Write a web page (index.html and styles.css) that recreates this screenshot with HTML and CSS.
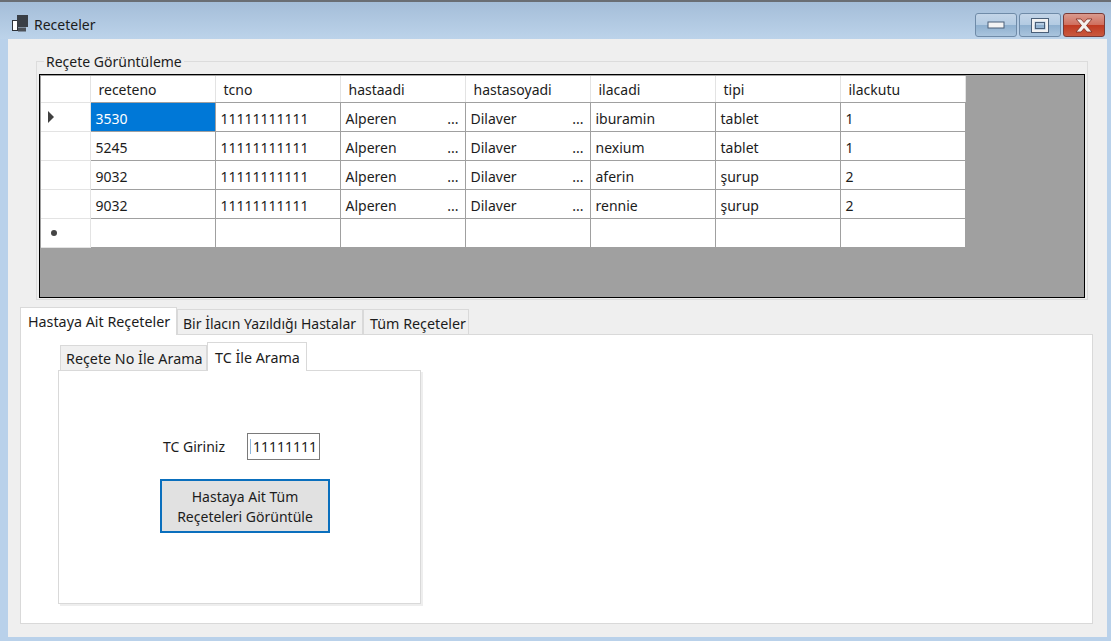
FILE: index.html
```html
<!DOCTYPE html>
<html lang="tr">
<head>
	<meta charset="UTF-8">
	<title>Receteler</title>
	<link rel="stylesheet" href="styles.css">
</head>
<body>
	<div class="window">
		<div class="titlebar">
			<svg class="appicon" width="18" height="17" viewBox="0 0 18 17">
				<rect x="1.5" y="5.5" width="5" height="10" fill="#fff" stroke="#2e3238" stroke-width="1"/>
				<rect x="6" y="0" width="11" height="12" fill="#3a3f46"/>
				<rect x="7" y="12.500" width="8" height="4" fill="#4c5158"/>
			</svg>
			<span class="title">Receteler</span>
			<div class="controls">
				<div class="ctl">
					<svg width="18" height="8" viewBox="0 0 18 8"><rect x="1" y="1" width="16" height="6" fill="#f4f4f4" stroke="#4a5f78"/></svg>
				</div>
				<div class="ctl">
					<svg width="18" height="15" viewBox="0 0 18 15"><rect x="2" y="2" width="14" height="11" fill="none" stroke="#f2f2f2" stroke-width="3"/><rect x="0.500" y="0.500" width="17" height="14" fill="none" stroke="#4a5f78"/><rect x="4.500" y="4.500" width="9" height="6" fill="none" stroke="#4a5f78"/></svg>
				</div>
				<div class="ctl close">
					<svg width="20" height="15" viewBox="0 0 20 15"><path d="M2 1H7L10 4.500L13 1H18L12.500 7.500L18 14H13L10 10.500L7 14H2L7.500 7.500Z" fill="#f4f1ef" stroke="#7a2a20" stroke-width="0.8"/></svg>
				</div>
			</div>
		</div>

		<div class="client">
			<fieldset class="group">
				<legend>Reçete Görüntüleme</legend>
				<div class="gridview">
					<table class="datagrid">
						<thead>
							<tr>
								<th class="rowhead"></th>
								<th>receteno</th>
								<th>tcno</th>
								<th>hastaadi</th>
								<th>hastasoyadi</th>
								<th>ilacadi</th>
								<th>tipi</th>
								<th>ilackutu</th>
							</tr>
						</thead>
						<tbody>
							<tr>
								<td class="rowhead"><span class="arrow"></span></td>
								<td class="selected">3530</td>
								<td>11111111111</td>
								<td class="cut"><span>Alperen</span><span class="dots">...</span></td>
								<td class="cut"><span>Dilaver</span><span class="dots">...</span></td>
								<td>iburamin</td>
								<td>tablet</td>
								<td>1</td>
							</tr>
							<tr>
								<td class="rowhead"></td>
								<td>5245</td>
								<td>11111111111</td>
								<td class="cut"><span>Alperen</span><span class="dots">...</span></td>
								<td class="cut"><span>Dilaver</span><span class="dots">...</span></td>
								<td>nexium</td>
								<td>tablet</td>
								<td>1</td>
							</tr>
							<tr>
								<td class="rowhead"></td>
								<td>9032</td>
								<td>11111111111</td>
								<td class="cut"><span>Alperen</span><span class="dots">...</span></td>
								<td class="cut"><span>Dilaver</span><span class="dots">...</span></td>
								<td>aferin</td>
								<td>şurup</td>
								<td>2</td>
							</tr>
							<tr>
								<td class="rowhead"></td>
								<td>9032</td>
								<td>11111111111</td>
								<td class="cut"><span>Alperen</span><span class="dots">...</span></td>
								<td class="cut"><span>Dilaver</span><span class="dots">...</span></td>
								<td>rennie</td>
								<td>şurup</td>
								<td>2</td>
							</tr>
							<tr>
								<td class="rowhead"><span class="star"></span></td>
								<td></td>
								<td></td>
								<td></td>
								<td></td>
								<td></td>
								<td></td>
								<td></td>
							</tr>
						</tbody>
					</table>
				</div>
			</fieldset>

			<div class="tabs outer">
				<div class="tab active">Hastaya Ait Reçeteler</div>
				<div class="tab t2">Bir İlacın Yazıldığı Hastalar</div>
				<div class="tab t3">Tüm Reçeteler</div>
			</div>
			<div class="tabpanel">
				<div class="tabs inner">
					<div class="tab i1">Reçete No İle Arama</div>
					<div class="tab active i2">TC İle Arama</div>
				</div>
				<div class="innerpanel">
					<div class="tcrow">
						<label>TC Giriniz</label>
						<div class="textbox"><span class="caret"></span>11111111</div>
					</div>
					<button class="bigbtn">Hastaya Ait Tüm<br>Reçeteleri Görüntüle</button>
				</div>
			</div>
		</div>
	</div>
</body>
</html>
```

FILE: styles.css
```css
* {
	box-sizing: border-box;
}

html,
body {
	margin: 0;
	height: 100%;
}

body {
	font-family: "Noto Sans", "Open Sans", sans-serif;
	font-size: 14px;
	color: #1c1c1c;
	background: #b9d1ea;
}

.window {
	height: 641px;
	padding: 0 4px 4px 8px;
	border-top: 2px solid #6a6e74;
	background: #b9d1ea;
}

.titlebar {
	height: 37px;
	margin: 0 -4px 0 -8px;
	padding: 0 6px 0 11px;
	display: flex;
	align-items: center;
	background: linear-gradient(#a4bdd8, #bcd3ea);
}

.appicon {
	margin-top: 6px;
}

.title {
	margin: 8px 0 0 5px;
	font-size: 14px;
}

.controls {
	margin-left: auto;
	margin-top: 9px;
	display: flex;
	gap: 2px;
}

.ctl {
	width: 42px;
	height: 24px;
	display: flex;
	align-items: center;
	justify-content: center;
	border: 1px solid #6f8ba8;
	border-radius: 3px;
	background: linear-gradient(#c3d5e8 0, #b3cbe2 48%, #8fb0cf 52%, #a9c4dd 100%);
}

.ctl.close {
	border-color: #7a3a36;
	background: linear-gradient(#d99a8e 0, #d0705f 48%, #c03a22 52%, #c9593f 100%);
}

.client {
	height: 598px;
	padding: 13px 14px 0 12px;
	background: #efefef;
}

.group {
	margin: 0 5px 0 16px;
	padding: 3px 2px 2px;
	height: 248px;
	border: 1px solid #dcdcdc;
}

.group legend {
	margin-left: 5px;
	padding: 0 2px;
	font-size: 14px;
	line-height: 19px;
}

.gridview {
	height: 224px;
	padding: 1px;
	border: 1px solid #000;
	background: #a0a0a0;
}

.datagrid {
	border-collapse: collapse;
	table-layout: fixed;
	width: 924px;
	background: #fff;
}

.datagrid th,
.datagrid td {
	width: 125px;
	padding: 0 4px 0 5px;
	border: 1px solid #a0a0a0;
	font-weight: normal;
	text-align: left;
	white-space: nowrap;
	overflow: hidden;
}

.datagrid tr:first-child th {
	border-top: 0;
}

.datagrid th {
	height: 26px;
	padding: 2px 4px 0 8px;
	border-color: #e3e3e3;
	border-bottom-color: #a0a0a0;
}

.datagrid td {
	height: 29px;
	padding-top: 4px;
}

.datagrid .rowhead {
	width: 49px;
	padding: 0;
	border: 1px solid #e3e3e3;
	border-left: 0;
}

.datagrid .selected {
	background: #0078d7;
	color: #fff;
}

.cut {
	position: relative;
}

.dots {
	position: absolute;
	right: 6px;
	top: 6px;
}

.arrow {
	display: block;
	width: 0;
	height: 0;
	margin-left: 7px;
	border-left: 6px solid #404040;
	border-top: 6px solid transparent;
	border-bottom: 6px solid transparent;
}

.star {
	display: block;
	width: 6px;
	height: 6px;
	margin-left: 10px;
	border-radius: 50%;
	background: #444;
}

.tabs {
	display: flex;
	align-items: flex-end;
}

.outer {
	height: 27px;
	margin-top: 7px;
}

.tab {
	height: 25px;
	padding: 2px 6px 0;
	display: flex;
	align-items: center;
	border: 1px solid #d9d9d9;
	border-bottom: 0;
	background: #f0f0f0;
	font-size: 14.3px;
	white-space: nowrap;
}

.tab.active {
	height: 28px;
	padding: 0 7px;
	background: #fff;
	position: relative;
	z-index: 1;
	margin-bottom: -1px;
}

.outer .tab.active {
	width: 157px;
}

.t2 {
	width: 186px;
	padding-left: 5px;
	font-size: 14px;
}

.t3 {
	width: 106px;
}

.tabpanel {
	height: 290px;
	padding: 7px 0 0 37px;
	border: 1px solid #d9d9d9;
	background: #fff;
}

.inner {
	height: 28px;
	padding-left: 2px;
}

.i1 {
	width: 147px;
	height: 25px;
	padding: 1px 5px 0;
}

.tab.i2 {
	width: 100px;
	height: 29px;
}

.innerpanel {
	width: 363px;
	height: 234px;
	padding: 62px 0 0 101px;
	border: 1px solid #d9d9d9;
	box-shadow: 2px 2px 0 #eee;
}

.tcrow {
	display: flex;
	align-items: center;
	gap: 22px;
	margin-left: 3px;
}

.tcrow label {
	width: 62px;
	white-space: nowrap;
}

.textbox {
	width: 73px;
	height: 27px;
	padding-left: 2px;
	display: flex;
	align-items: center;
	border: 1px solid #7a7a7a;
	overflow: hidden;
	font-size: 14px;
}

.caret {
	width: 1px;
	height: 15px;
	margin-right: 2px;
	background: #8fb8dc;
	flex: none;
}

.bigbtn {
	display: block;
	width: 170px;
	height: 54px;
	margin-top: 19px;
	padding: 2px 0 0;
	border: 2px solid #0a6fbd;
	background: #e1e1e1;
	color: #1c1c1c;
	font-family: inherit;
	font-size: 14px;
	line-height: 20px;
}
```
